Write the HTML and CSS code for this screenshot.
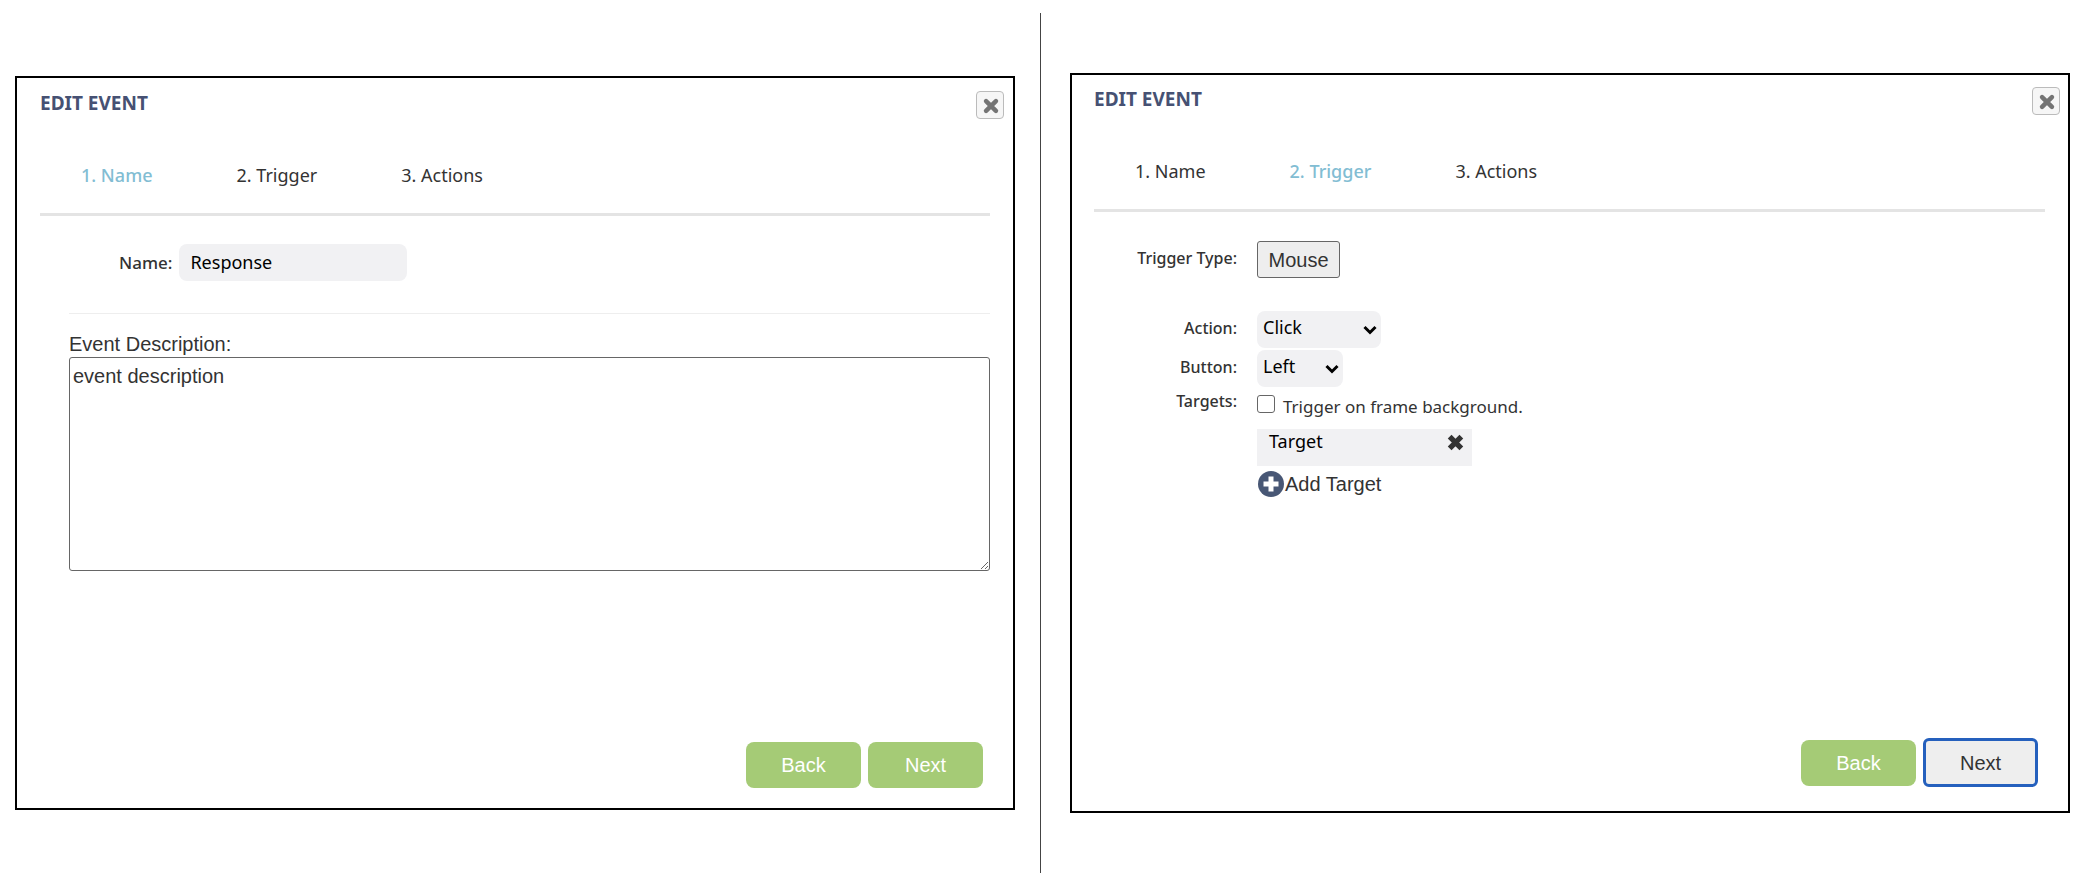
FILE: index.html
```html
<!DOCTYPE html>
<html lang="en">
<head>
<meta charset="utf-8">
<title>Edit Event</title>
<link rel="stylesheet" href="styles.css">
</head>
<body>
<main class="page">
  <div class="pane pane-left">
    <section class="dialog" aria-labelledby="title-name">
      <header class="dialog-header">
        <h2 class="dialog-title" id="title-name">EDIT EVENT</h2>
        <button class="close" type="button" aria-label="Close"><svg class="close-icon" viewBox="0 0 16 16"><path d="M3.6 3.6 12.4 12.4M12.4 3.6 3.6 12.4"/></svg></button>
      </header>
      <nav class="steps">
        <a class="step active" href="#name">1. Name</a>
        <a class="step" href="#trigger">2. Trigger</a>
        <a class="step" href="#actions">3. Actions</a>
      </nav>
      <form class="name-form">
        <div class="name-row">
          <label class="label" for="event-name">Name:</label>
          <input class="field" id="event-name" type="text" value="Response">
        </div>
        <div class="description">
          <label class="description-label" for="event-description">Event Description:</label>
          <textarea class="description-box" id="event-description">event description</textarea>
        </div>
      </form>
      <footer class="dialog-footer">
        <button class="btn" type="button">Back</button>
        <button class="btn" type="button">Next</button>
      </footer>
    </section>
  </div>
  <div class="pane pane-right">
    <section class="dialog" aria-labelledby="title-trigger">
      <header class="dialog-header">
        <h2 class="dialog-title" id="title-trigger">EDIT EVENT</h2>
        <button class="close" type="button" aria-label="Close"><svg class="close-icon" viewBox="0 0 16 16"><path d="M3.6 3.6 12.4 12.4M12.4 3.6 3.6 12.4"/></svg></button>
      </header>
      <nav class="steps">
        <a class="step" href="#name">1. Name</a>
        <a class="step active" href="#trigger">2. Trigger</a>
        <a class="step" href="#actions">3. Actions</a>
      </nav>
      <form class="trigger-form">
        <div class="trigger-row trigger-type">
          <span class="label" id="type-label">Trigger Type:</span>
          <button class="type-button" type="button" aria-describedby="type-label">Mouse</button>
        </div>
        <div class="trigger-row">
          <label class="label" for="action">Action:</label>
          <span class="select-wrap">
            <select class="select select-action" id="action"><option>Click</option></select>
            <svg class="chevron" viewBox="0 0 14 10"><path d="M1.5 2 7 7.5 12.5 2"/></svg>
          </span>
        </div>
        <div class="trigger-row">
          <label class="label" for="button">Button:</label>
          <span class="select-wrap">
            <select class="select select-button" id="button"><option>Left</option></select>
            <svg class="chevron" viewBox="0 0 14 10"><path d="M1.5 2 7 7.5 12.5 2"/></svg>
          </span>
        </div>
        <div class="trigger-row targets">
          <span class="label">Targets:</span>
          <div class="target-list">
            <label class="check"><input class="check-box" type="checkbox">Trigger on frame background.</label>
            <div class="target">
              <span>Target</span>
              <button class="remove" type="button" aria-label="Remove target"><svg class="remove-icon" viewBox="0 0 16 16"><path d="M2.5 2.5 13.5 13.5M13.5 2.5 2.5 13.5"/></svg></button>
            </div>
            <button class="add" type="button"><svg class="add-icon" viewBox="0 0 26 26"><circle cx="13" cy="13" r="13"/><path d="M13 5.5V20.5M5.5 13H20.5"/></svg>Add Target</button>
          </div>
        </div>
      </form>
      <footer class="dialog-footer">
        <button class="btn" type="button">Back</button>
        <button class="btn focused" type="button">Next</button>
      </footer>
    </section>
  </div>
</main>
</body>
</html>
```
FILE: styles.css
```css
* {
  box-sizing: border-box;
}

body {
  margin: 0;
  background: #fff;
  color: #333;
  font: 18px/24px "Noto Sans", sans-serif;
}

button,
input,
select,
textarea {
  margin: 0;
  color: inherit;
  font: inherit;
}

.page {
  display: grid;
  grid-template-columns: 1040fr 1050fr;
  min-height: 100vh;
  position: relative;
}

/* Rule between the two panes */
.page::before {
  content: "";
  position: absolute;
  top: 13px;
  bottom: 11px;
  left: calc(100% * 1040 / 2090);
  border-left: 1px solid #444;
}

.pane {
  display: flex;
}

.pane-left {
  padding: 76px 25px 74px 15px;
}

.pane-right {
  padding: 73px 20px 71px 30px;
}

.dialog {
  display: flex;
  flex: 1;
  flex-direction: column;
  border: 2px solid #000;
}

.dialog-header {
  display: flex;
  align-items: flex-start;
  justify-content: space-between;
  padding: 12px 8px 0 22px;
}

.pane-left .dialog-header {
  padding: 13px 9px 0 23px;
}

.dialog-title {
  margin: 0;
  color: #465173;
  font-size: 19px;
  font-weight: 700;
}

.close {
  display: grid;
  place-items: center;
  width: 28px;
  height: 28px;
  padding: 2px 0 0 2px;
  border: 1px solid #bbb;
  border-radius: 4px;
  background: #f6f6f6;
}

.close-icon {
  width: 18px;
  height: 18px;
  fill: none;
  stroke: #747474;
  stroke-linecap: round;
  stroke-width: 4;
}

.steps {
  display: flex;
  gap: 84px;
  margin: 0 23px 0 22px;
  padding: 44px 41px 26px;
  border-bottom: 3px solid #e4e4e4;
}

.pane-left .steps {
  margin-left: 23px;
}

.step {
  color: #333;
  text-decoration: none;
}

.step.active {
  color: #82bdd3;
  font-weight: 500;
}

.label {
  font-size: 17px;
  font-weight: 500;
  text-align: right;
}

.name-form {
  padding: 28px 23px 0 52px;
}

.name-row {
  display: flex;
  align-items: center;
  gap: 7px;
  padding: 0 50px 32px;
}

.field {
  width: 228px;
  height: 37px;
  padding: 0 11px 2px;
  border: 0;
  border-radius: 8px;
  background: #f1f1f3;
  color: #000;
}

.description {
  display: flex;
  flex-direction: column;
  padding-top: 17px;
  border-top: 1px solid #eee;
  font: 20px/26px "Liberation Sans", sans-serif;
}

.description-box {
  height: 214px;
  padding: 5px 3px;
  border: 1px solid #666;
  border-radius: 3px;
  background: #fff;
}

.dialog-footer {
  display: flex;
  align-items: center;
  justify-content: flex-end;
  gap: 7px;
  margin-top: auto;
  padding: 16px 30px 20px;
}

.pane-right .dialog-footer {
  padding-bottom: 24px;
}

.btn {
  width: 115px;
  height: 46px;
  border: 0;
  border-radius: 8px;
  background: #a5cb76;
  color: #fff;
  font: 20px/24px "Liberation Sans", sans-serif;
}

.btn.focused {
  height: 49px;
  border: 3px solid #2560bd;
  border-radius: 6px;
  background: #eee;
  color: #333;
}

.trigger-form {
  display: flex;
  flex-direction: column;
  gap: 2px;
  padding: 29px 23px 0;
}

.trigger-row {
  display: grid;
  grid-template-columns: 142px 1fr;
  gap: 20px;
  align-items: center;
  justify-items: start;
}

.trigger-row > .label {
  justify-self: end;
  padding-bottom: 3px;
  font-size: 16px;
}

.trigger-type {
  margin-bottom: 31px;
}

.type-button {
  width: 83px;
  height: 37px;
  padding: 0;
  border: 1px solid #666;
  border-radius: 3px;
  background: #eee;
  font: 20px/24px "Liberation Sans", sans-serif;
}

.select-wrap {
  display: grid;
  position: relative;
}

.select {
  appearance: none;
  height: 37px;
  padding: 0 6px 6px;
  border: 0;
  border-radius: 8px;
  background: #f1f1f3;
  color: #000;
}

.select-action {
  width: 124px;
}

.select-button {
  width: 86px;
}

.chevron {
  position: absolute;
  top: 14px;
  right: 4px;
  width: 14px;
  height: 10px;
  fill: none;
  pointer-events: none;
  stroke: #000;
  stroke-width: 3;
}

.targets {
  align-items: start;
}

.target-list {
  display: flex;
  flex-direction: column;
  align-items: flex-start;
}

.check {
  display: flex;
  gap: 8px;
  padding-top: 6px;
  font-size: 17px;
}

.check-box {
  appearance: none;
  width: 18px;
  height: 18px;
  border: 1px solid #666;
  border-radius: 3px;
  background: #fff;
}

.target {
  display: flex;
  align-items: flex-start;
  justify-content: space-between;
  width: 215px;
  height: 37px;
  margin-top: 10px;
  padding: 0 8px 0 12px;
  background: #f1f1f3;
  color: #000;
}

.remove,
.add {
  padding: 0;
  border: 0;
  background: none;
}

.remove {
  display: grid;
  height: 26px;
  place-items: center;
}

.remove-icon {
  width: 17px;
  height: 17px;
  fill: none;
  stroke: #333;
  stroke-width: 5;
}

.add {
  display: flex;
  align-items: center;
  gap: 1px;
  margin-top: 5px;
  padding-left: 1px;
  color: #333;
  font: 20px/24px "Liberation Sans", sans-serif;
}

.add-icon {
  width: 26px;
  height: 26px;
  fill: #485775;
  stroke: #fff;
  stroke-width: 5;
}

.add-icon circle {
  stroke: none;
}
```
